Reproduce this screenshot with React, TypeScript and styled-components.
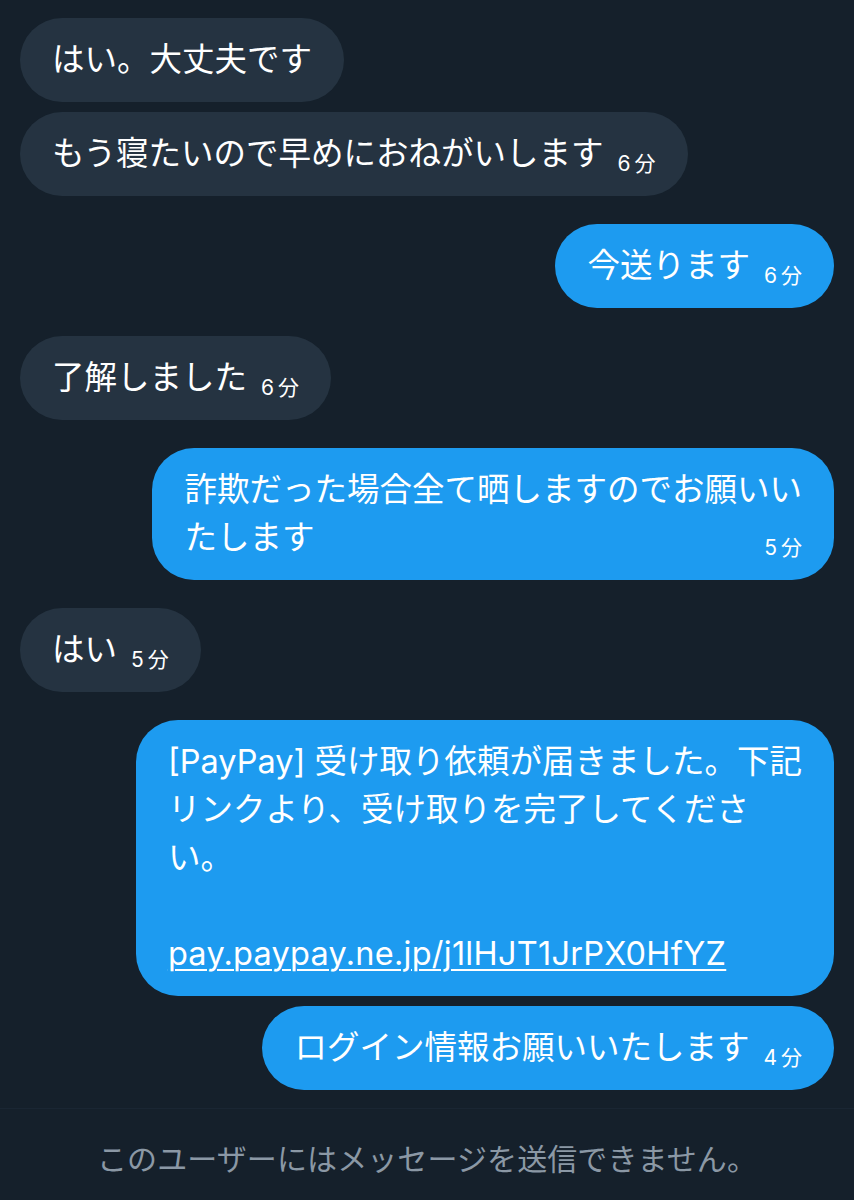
import styled, {createGlobalStyle} from "styled-components";

const GlobalStyle = createGlobalStyle`
  html, body {
    margin: 0;
    padding: 0;
    background: #15202b;
  }
  body {
    font-family: "Inter", "Noto Sans CJK JP", sans-serif;
    -webkit-font-smoothing: antialiased;
  }
`

const Page = styled.div`
  width: 854px;
  min-height: 1200px;
  background: #15202b;
  display: flex;
  flex-direction: column;
`

const Thread = styled.div`
  display: flex;
  flex-direction: column;
  padding: 18px 20px 10px;
`

const Row = styled.div<{ $mine: boolean; $gap: number }>`
  display: flex;
  justify-content: ${p => (p.$mine ? "flex-end" : "flex-start")};
  margin-top: ${p => p.$gap}px;
`

const Bubble = styled.div<{ $mine: boolean }>`
  display: flow-root;
  max-width: 700px;
  box-sizing: border-box;
  padding: 18px 32px;
  border-radius: 42px;
  background: ${p => (p.$mine ? "#1d9bf0" : "#253341")};
  color: #fff;
  font-size: 32.5px;
  line-height: 48px;
  white-space: pre-wrap;
  word-break: break-all;
`

const Time = styled.span`
  float: right;
  margin: 20px -4px 0 14px;
  font-size: 21px;
  line-height: 28px;
  letter-spacing: 4px;
  color: #fff;
`

const Link = styled.span`
  letter-spacing: 0.25px;
  text-decoration: underline;
  text-decoration-thickness: 2px;
  text-underline-offset: 4px;
`

const Footer = styled.div`
  border-top: 1px solid #1a2633;
  margin-top: 8px;
  height: 96px;
  display: flex;
  align-items: center;
  justify-content: center;
  color: #8b98a5;
  font-size: 30px;
  font-family: "Noto Sans CJK JP", sans-serif;
  letter-spacing: 0.1px;
`

type Message = {
    mine: boolean
    text: string
    time?: string
    link?: string
}

const messages: Message[] = [
    {mine: false, text: "はい。大丈夫です"},
    {mine: false, text: "もう寝たいので早めにおねがいします", time: "6分"},
    {mine: true, text: "今送ります", time: "6分"},
    {mine: false, text: "了解しました", time: "6分"},
    {mine: true, text: "詐欺だった場合全て晒しますのでお願いい\nたします", time: "5分"},
    {mine: false, text: "はい", time: "5分"},
    {
        mine: true,
        text: "[PayPay] 受け取り依頼が届きました。下記\nリンクより、受け取りを完了してくださ\nい。\n\n",
        link: "pay.paypay.ne.jp/j1lHJT1JrPX0HfYZ"
    },
    {mine: true, text: "ログイン情報お願いいたします", time: "4分"},
]

const App = () => {
    return (
        <Page>
            <GlobalStyle/>
            <Thread>
                {messages.map((m, i) => {
                    const prev = messages[i - 1]
                    const gap = i === 0 ? 0 : prev.mine === m.mine ? 10 : 28
                    return (
                        <Row key={i} $mine={m.mine} $gap={gap}>
                            <Bubble $mine={m.mine}>
                                {m.text}
                                {m.link && <Link>{m.link}</Link>}
                                {m.time && <Time>{m.time}</Time>}
                            </Bubble>
                        </Row>
                    )
                })}
            </Thread>
            <Footer>このユーザーにはメッセージを送信できません。</Footer>
        </Page>
    )
}

export default App
